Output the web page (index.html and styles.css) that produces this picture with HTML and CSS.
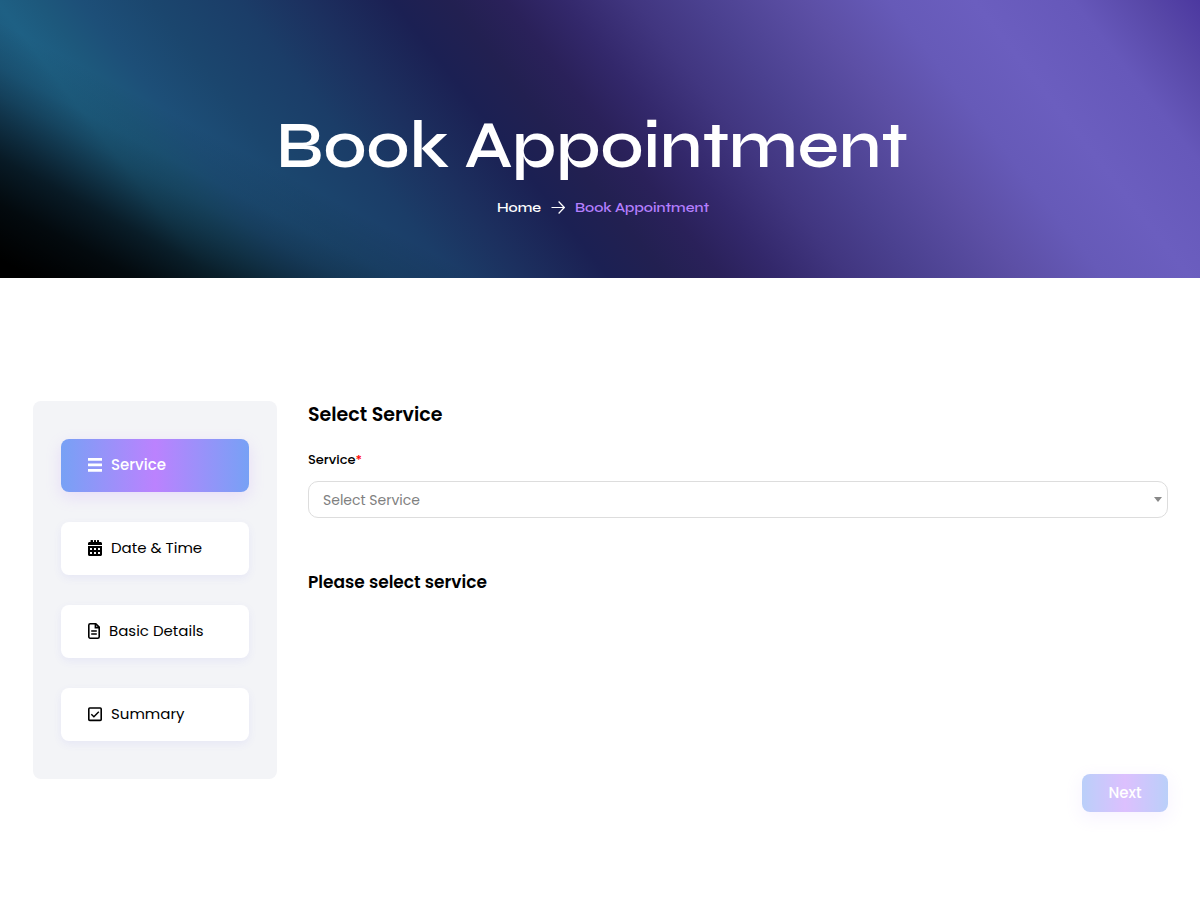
FILE: index.html
```html
<!DOCTYPE html>
<html lang="en">
<head>
<meta charset="utf-8">
<meta name="viewport" content="width=device-width, initial-scale=1">
<title>Book Appointment</title>
<link rel="stylesheet" href="styles.css">
</head>
<body>
<header class="hero">
  <h1 class="hero-title">Book Appointment</h1>
  <nav class="crumbs" aria-label="Breadcrumb">
    <a class="crumb-home" href="#">Home</a>
    <svg class="crumb-arrow" viewBox="0 0 14 14" aria-hidden="true"><path d="M.5 6.500h12.600M7.600.5l5.700 6-5.700 6" fill="none" stroke="currentColor" stroke-width="1.200"/></svg>
    <span class="crumb-current">Book Appointment</span>
  </nav>
</header>
<main class="booking">
  <nav class="steps" aria-label="Booking steps">
    <button class="step step-active" type="button">
      <svg class="icon" viewBox="0 0 14 16" aria-hidden="true"><path d="M0 1h14v2.800H0zM0 6.500h14v2.800H0zM0 12h14v2.800H0z" fill="currentColor"/></svg>
      Service
    </button>
    <button class="step" type="button">
      <svg class="icon" viewBox="0 0 448 512" aria-hidden="true"><path fill="currentColor" fill-rule="evenodd" d="M0 464c0 26.500 21.500 48 48 48h352c26.500 0 48-21.500 48-48V192H0v272zm320-196c0-6.600 5.400-12 12-12h40c6.600 0 12 5.400 12 12v40c0 6.600-5.400 12-12 12h-40c-6.600 0-12-5.400-12-12v-40zm0 128c0-6.600 5.400-12 12-12h40c6.600 0 12 5.400 12 12v40c0 6.600-5.400 12-12 12h-40c-6.600 0-12-5.400-12-12v-40zM192 268c0-6.600 5.400-12 12-12h40c6.600 0 12 5.400 12 12v40c0 6.600-5.400 12-12 12h-40c-6.600 0-12-5.400-12-12v-40zm0 128c0-6.600 5.400-12 12-12h40c6.600 0 12 5.400 12 12v40c0 6.600-5.400 12-12 12h-40c-6.600 0-12-5.400-12-12v-40zM64 268c0-6.600 5.400-12 12-12h40c6.600 0 12 5.400 12 12v40c0 6.600-5.400 12-12 12H76c-6.600 0-12-5.400-12-12v-40zm0 128c0-6.600 5.400-12 12-12h40c6.600 0 12 5.400 12 12v40c0 6.600-5.400 12-12 12H76c-6.600 0-12-5.400-12-12v-40zM400 64h-48V16c0-8.800-7.200-16-16-16h-32c-8.800 0-16 7.200-16 16v48h-32V16c0-8.800-7.200-16-16-16h-32c-8.800 0-16 7.200-16 16v48h-32V16c0-8.800-7.200-16-16-16h-32C89 0 82 7 82 16v48H48C21.500 64 0 85.500 0 112v48h448v-48c0-26.500-21.500-48-48-48z"/></svg>
      Date &amp; Time
    </button>
    <button class="step" type="button">
      <svg class="icon icon-file" viewBox="0 0 12 16" aria-hidden="true"><path d="M.8 2.200C.8 1.400 1.400.8 2.200.8h5.600l3.400 3.400v9.600c0 .8-.6 1.400-1.400 1.400H2.200c-.8 0-1.400-.6-1.400-1.400zM7.400.8v3.800h3.800M3.200 8h5.600M3.200 11h5.600" fill="none" stroke="currentColor" stroke-width="1.600"/></svg>
      Basic Details
    </button>
    <button class="step" type="button">
      <svg class="icon" viewBox="0 0 14 16" aria-hidden="true"><rect x=".8" y="2" width="12.400" height="12.400" rx="1" fill="none" stroke="currentColor" stroke-width="1.600"/><path d="M3.300 8.200l2.600 2.500 4.900-4.900" fill="none" stroke="currentColor" stroke-width="1.500"/></svg>
      Summary
    </button>
  </nav>
  <form class="panel">
    <h2 class="panel-title">Select Service</h2>
    <label class="field-label" for="service">Service<span class="required">*</span></label>
    <div class="select-wrap">
      <select class="select" id="service" name="service">
        <option>Select Service</option>
      </select>
    </div>
    <h3 class="notice">Please select service</h3>
    <button class="next" type="button" disabled>Next</button>
  </form>
</main>
</body>
</html>
```

FILE: styles.css
```css
* {
  box-sizing: border-box;
}

body {
  margin: 0;
  background: #fff;
  color: #000;
  font-family: Poppins, Inter, sans-serif;
  font-size: 15px;
}

h1, h2, h3 {
  margin: 0;
}

.hero {
  display: flex;
  flex-direction: column;
  align-items: center;
  padding: 106px 16px 60px 0;
  color: #fff;
  font-family: Syne, Inter, sans-serif;
  background:
    linear-gradient(28deg, #000 2%, rgba(0, 0, 0, 0.88) 8%, rgba(0, 0, 0, 0.68) 13%, rgba(0, 0, 0, 0.42) 17%, rgba(0, 0, 0, 0.24) 20%, rgba(0, 0, 0, 0.1) 23%, transparent 28%),
    linear-gradient(52deg, #134a6c 0%, #1a5275 9%, #1e6084 15%, #1d587c 18%, #1d4f78 21%, #1b466e 26%, #1b3d68 32%, #1c305f 37%, #1b2053 43%, #222051 47%, #2a215a 51%, #33286b 55%, #413680 60%, #4b4190 65%, #5c4fa5 72%, #665ab8 78%, #6b5ebf 84%, #6658ba 91%, #5848a8 96%, #4c38a0 100%);
}

.hero-title {
  font-size: 66px;
  line-height: 80px;
  font-weight: 600;
  text-align: center;
}

.crumbs {
  display: flex;
  align-items: center;
  gap: 10px;
  padding-left: 22px;
  margin-top: 12px;
  font-size: 14px;
  line-height: 20px;
  font-weight: 600;
}

.crumb-home {
  color: #fff;
  text-decoration: none;
}

.crumb-arrow {
  width: 14px;
  height: 14px;
}

.crumb-current {
  color: #b57fff;
}

.booking {
  display: grid;
  grid-template-columns: 244px 1fr;
  gap: 31px;
  align-items: start;
  padding: 123px 32px 88px 33px;
}

.steps {
  display: flex;
  flex-direction: column;
  gap: 30px;
  padding: 38px 28px;
  border-radius: 8px;
  background: #f3f4f7;
}

.step {
  display: flex;
  align-items: center;
  gap: 9px;
  height: 53px;
  padding: 0 27px 2px;
  border: 0;
  border-radius: 8px;
  background: #fff;
  color: #000;
  font: inherit;
  font-size: 15px;
  box-shadow: 0 3px 8px rgba(90, 90, 230, 0.08);
}

.step-active {
  background: linear-gradient(90deg, #77a1f5, #bb82fe 50%, #77a1f5);
  color: #fff;
  font-weight: 500;
  box-shadow: 0 5px 16px rgba(187, 130, 254, 0.2);
}

.icon {
  width: 14px;
  height: 16px;
}

.icon-file {
  width: 12px;
}

.panel {
  display: flex;
  flex-direction: column;
}

.panel-title {
  font-size: 19px;
  line-height: 28px;
  font-weight: 600;
}

.field-label {
  margin: 21px 0 11px;
  font-size: 13px;
  line-height: 20px;
  font-weight: 500;
}

.required {
  color: #f00;
}

.select-wrap {
  position: relative;
}

.select-wrap::after {
  content: "";
  position: absolute;
  top: 16px;
  right: 6px;
  width: 8px;
  height: 5px;
  background: #888;
  clip-path: polygon(0 0, 100% 0, 50% 100%);
  pointer-events: none;
}

.select {
  display: block;
  width: 100%;
  height: 37px;
  padding: 0 14px;
  border: 1px solid #ddd;
  border-radius: 10px;
  background: #fff;
  color: #808080;
  font: inherit;
  font-size: 14px;
  appearance: none;
}

.notice {
  margin-top: 51px;
  font-size: 17px;
  line-height: 26px;
  font-weight: 600;
}

.next {
  align-self: flex-end;
  width: 86px;
  height: 38px;
  margin-top: 179px;
  padding: 0 6px 1px;
  border: 0;
  border-radius: 8px;
  background: linear-gradient(90deg, #77a1f5, #bb82fe 50%, #77a1f5);
  color: #fff;
  font: inherit;
  font-size: 15px;
  font-weight: 500;
  box-shadow: 0 5px 16px rgba(187, 130, 254, 0.2);
  opacity: 0.5;
}
```
